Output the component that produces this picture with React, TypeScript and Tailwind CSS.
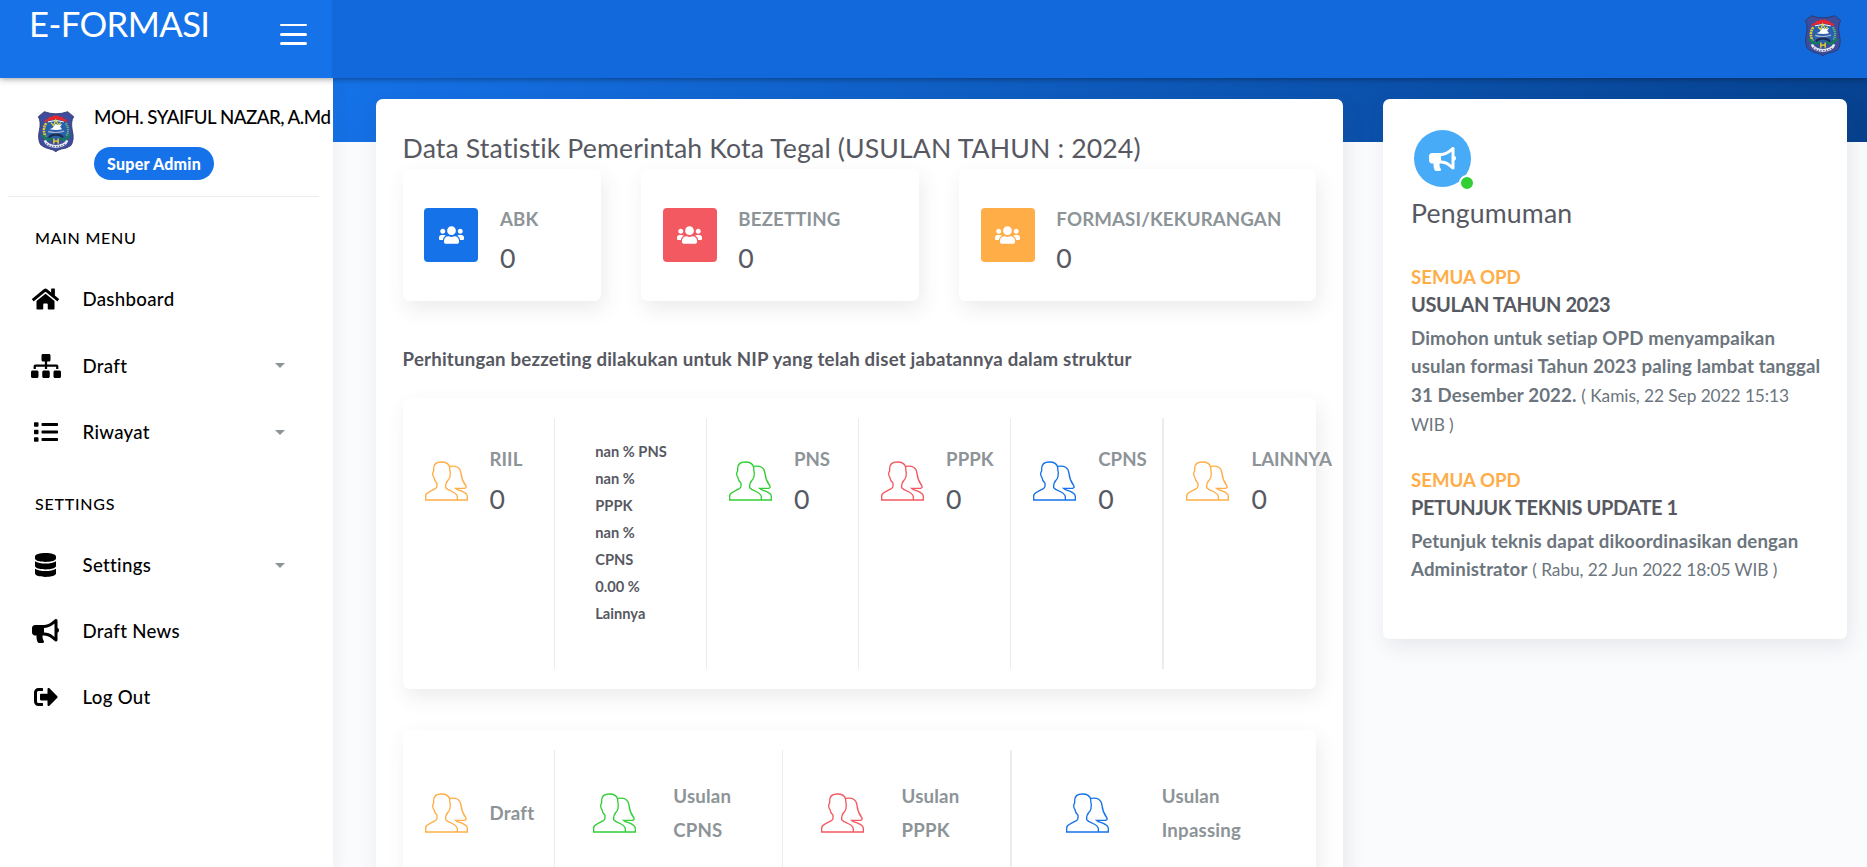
import React from 'react';
import {
  FaHome,
  FaSitemap,
  FaList,
  FaDatabase,
  FaBullhorn,
  FaSignOutAlt,
  FaUsers,
} from 'react-icons/fa';

const cardShadow = 'shadow-[3px_8px_20px_0_rgba(69,65,78,0.1)]';

function Crest() {
  return (
    <svg viewBox="0 0 115 130" className="h-[43px] w-[38px] shrink-0">
      <path
        d="M22 5 Q57 18 93 5 L111 20 Q101 36 107 62 Q114 92 102 108 Q88 117 74 118 Q62 121 57 126 Q50 120 38 118 Q22 115 11 105 Q1 88 7 62 Q13 36 4 20 Z"
        fill="#3f4c9c"
        stroke="#2b3568"
        strokeWidth="2.5"
      />
      <path d="M30 38 Q57 24 85 38 Q94 60 84 82 Q57 92 30 82 Q20 60 30 38 Z" fill="#2a5fae" />
      <path d="M22 38 L26 29 L33 27 L38 20 L45 21 L51 16 L57 18 L63 16 L70 21 L77 20 L81 27 L89 29 L92 38 L82 34 Q57 24 32 34 Z" fill="#e5282d" />
      <path d="M33 36 Q57 27 81 36" fill="none" stroke="#fff" strokeWidth="3" />
      <path d="M28 40 Q15 58 26 82" fill="none" stroke="#dcd22a" strokeWidth="8" strokeDasharray="6 2" />
      <path d="M87 40 Q100 58 89 80" fill="none" stroke="#4fbb8b" strokeWidth="7" strokeDasharray="4 2" />
      <path d="M42 38 L50 47 L57 30 L64 45 L72 38" fill="none" stroke="#e5df35" strokeWidth="3.5" />
      <path d="M38 58 Q49 55 51 49 L57 41 L62 46 L76 42 L70 51 L76 58 Q60 63 38 58 Z" fill="#fff" />
      <path d="M34 65 Q57 72 82 64" fill="none" stroke="#a3b4cc" strokeWidth="4" />
      <path d="M14 76 Q25 80 28 89 Q39 92 47 84 M101 76 Q90 80 87 89 Q76 92 68 84" fill="none" stroke="#0c8258" strokeWidth="7" />
      <path d="M36 83 Q44 74 57 74 Q71 74 79 83" fill="none" stroke="#1c2a4c" strokeWidth="6" />
      <path d="M51 86 V102 M64 86 V102 M49 94 H66" fill="none" stroke="#eadf29" strokeWidth="4" />
      <path d="M20 93 L27 91 Q34 104 57 106 Q81 104 88 91 L95 93 Q88 113 57 115 Q27 113 20 93 Z" fill="#e4e7f0" />
      <path d="M28 101 Q38 111 57 111 Q77 111 87 101" fill="none" stroke="#58628f" strokeWidth="4" strokeDasharray="4 4" />
    </svg>
  );
}

function PeopleOutline({ className }: { className: string }) {
  return (
    <svg viewBox="0 0 129 120" className={`h-10 w-[43px] shrink-0 ${className}`} fill="none" stroke="currentColor" strokeWidth="4">
      <path d="M2 117 V105 Q2 98 14 92 L31 83 Q36 80 36 75 V67 Q28 60 27 50 Q23 45 23 39 Q23 33 26 30 V22 Q26 3 49 3 Q71 3 74 19 Q74 29 76 36 Q75 42 75 47 Q73 54 69 58 Q61 66 62 80 L68 85 L84 93 Q97 100 97 108 V117" />
      <path d="M74 16 Q105 11 108 37 Q110 57 121 72 Q127 80 119 82 H92 L97 86 Q113 91 119 95 Q127 100 127 106 V117" />
      <path d="M0 117 H129" />
    </svg>
  );
}

function MenuItem({ icon, label, height, caret }: { icon: React.ReactNode; label: string; height: string; caret?: boolean }) {
  return (
    <li className={`flex items-center pl-[30px] pr-[48px] text-black ${height}`}>
      <span className="flex w-[31px] justify-center">{icon}</span>
      <span className="ml-[21.5px] text-[18.67px] leading-7 font-medium tracking-[0.3px]">{label}</span>
      {caret && (
        <span className="ml-auto border-x-[5px] border-t-[5px] border-x-transparent border-t-[#8d9498]" />
      )}
    </li>
  );
}

function SectionLabel({ children }: { children: React.ReactNode }) {
  return <h4 className="pl-[35px] text-[16px] leading-6 font-medium tracking-[0.75px] text-black">{children}</h4>;
}

function Sidebar() {
  return (
    <aside className="relative z-10 w-[333px] shrink-0 bg-white shadow-[4px_4px_13px_0_rgba(69,65,78,0.06)]">
      <div className="mx-2 mr-[14px] flex h-[119px] border-b border-[#ebecec] pl-[29px] pt-[25px]">
        <div className="mt-[7px]">
          <Crest />
        </div>
        <div className="ml-[19px] flex flex-col items-start whitespace-nowrap">
          <span className="text-[18.67px] leading-7 font-medium tracking-[-0.48px] text-black">MOH. SYAIFUL NAZAR, A.Md</span>
          <span className="mt-4 flex h-[33px] items-center rounded-full bg-[#1572e8] px-[13px] text-[16px] font-black tracking-[0.25px] text-white">
            Super Admin
          </span>
        </div>
      </div>
      <nav className="pt-[29px]">
        <SectionLabel>MAIN MENU</SectionLabel>
        <ul className="mt-4">
          <MenuItem height="h-[66.5px]" icon={<FaHome className="h-6 w-[27px]" />} label="Dashboard" />
          <MenuItem height="h-[66.5px]" icon={<FaSitemap className="h-6 w-[30px]" />} label="Draft" caret />
          <MenuItem height="h-[66px]" icon={<FaList className="h-6 w-6" />} label="Riwayat" caret />
        </ul>
        <div className="mt-[27px]">
          <SectionLabel>SETTINGS</SectionLabel>
        </div>
        <ul className="mt-4">
          <MenuItem height="h-[66px]" icon={<FaDatabase className="h-6 w-[21px]" />} label="Settings" caret />
          <MenuItem height="h-[66px]" icon={<FaBullhorn className="h-6 w-[27px]" />} label="Draft News" />
          <MenuItem height="h-[66px]" icon={<FaSignOutAlt className="h-6 w-6" />} label="Log Out" />
        </ul>
      </nav>
    </aside>
  );
}

function SummaryCard({ width, color, label }: { width: string; color: string; label: string }) {
  return (
    <div className={`flex h-[132px] rounded-[6.67px] bg-white pl-[21.7px] ${width} ${cardShadow}`}>
      <div className={`mt-[39px] flex h-[54px] w-[54px] shrink-0 items-center justify-center rounded-[4px] text-white ${color}`}>
        <FaUsers className="h-5 w-[25px]" />
      </div>
      <div className="ml-[21.7px] mt-9">
        <p className="text-[18.67px] leading-7 font-bold tracking-[0.13px] text-[#8d9498]">{label}</p>
        <p className="mt-[7px] text-[26.67px] leading-[37px] text-[#575962]">0</p>
      </div>
    </div>
  );
}

function CountCell({ color, label, last }: { color: string; label: string; last?: boolean }) {
  return (
    <div className={`flex border-[#ebecec] pl-[22px] ${last ? 'border-l' : 'border-r'}`}>
      <PeopleOutline className={`mt-[43.3px] ${color}`} />
      <div className="ml-[22px] mt-[27px]">
        <p className="text-[18.67px] leading-7 font-bold text-[#8d9498]">{label}</p>
        <p className="mt-[8px] text-[26.67px] leading-[37px] text-[#575962]">0</p>
      </div>
    </div>
  );
}

const shares = ['nan % PNS', 'nan %', 'PPPK', 'nan %', 'CPNS', '0.00 %', 'Lainnya'];

function StatisticsCard() {
  return (
    <section className={`h-[900px] w-[967px] shrink-0 rounded-[6.67px] bg-white pl-[26.6px] pr-[27.4px] pt-[33px] ${cardShadow}`}>
      <h2 className="text-[26.67px] leading-8 tracking-[0.12px] whitespace-nowrap text-[#575962]">
        Data Statistik Pemerintah Kota Tegal (USULAN TAHUN : 2024)
      </h2>
      <div className="mt-[5px] flex gap-10">
        <SummaryCard width="w-[198.4px]" color="bg-[#1572e8]" label="ABK" />
        <SummaryCard width="w-[278px]" color="bg-[#f25961]" label="BEZETTING" />
        <SummaryCard width="w-[356.6px]" color="bg-[#ffad46]" label="FORMASI/KEKURANGAN" />
      </div>
      <p className="mt-[44px] text-[18.67px] leading-7 font-bold tracking-[0.19px] whitespace-nowrap text-[#575962]">
        Perhitungan bezzeting dilakukan untuk NIP yang telah diset jabatannya dalam struktur
      </p>

      <div className={`mt-[25px] grid h-[291px] grid-cols-6 rounded-[6.67px] bg-white py-5 ${cardShadow}`}>
        <CountCell color="text-[#ffad46]" label="RIIL" />
        <div className="border-r border-[#ebecec] pl-[40.5px] pt-5 text-[14.67px] leading-[27px] font-bold text-[#575962]">
          {shares.map((share, i) => (
            <p key={i}>{share}</p>
          ))}
        </div>
        <CountCell color="text-[#31ce36]" label="PNS" />
        <CountCell color="text-[#f25961]" label="PPPK" />
        <CountCell color="text-[#1572e8]" label="CPNS" />
        <CountCell color="text-[#ffad46]" label="LAINNYA" last />
      </div>

      <div className={`mt-[41px] grid h-[200px] grid-cols-12 rounded-[6.67px] bg-white py-5 text-[18.67px] leading-[34px] font-bold tracking-[0.2px] text-[#8d9498] ${cardShadow}`}>
        <div className="col-span-2 flex border-r border-[#ebecec] pl-[22px]">
          <PeopleOutline className="mt-[43.3px] text-[#ffad46]" />
          <p className="ml-[22px] mt-[46px]">Draft</p>
        </div>
        <div className="col-span-3 flex border-r border-[#ebecec] pl-[38px]">
          <PeopleOutline className="mt-[43.3px] text-[#31ce36]" />
          <p className="ml-[37.5px] mt-[29px] w-20">Usulan CPNS</p>
        </div>
        <div className="col-span-3 flex border-r border-[#ebecec] pl-[38px]">
          <PeopleOutline className="mt-[43.3px] text-[#f25961]" />
          <p className="ml-[37.5px] mt-[29px] w-20">Usulan PPPK</p>
        </div>
        <div className="col-span-4 flex border-l border-[#ebecec] pl-[53.5px]">
          <PeopleOutline className="mt-[43.3px] text-[#1572e8]" />
          <p className="ml-[53px] mt-[29px] w-24">Usulan Inpassing</p>
        </div>
      </div>
    </section>
  );
}

function Announcement({ title, body, date }: { title: string; body: string; date: string }) {
  return (
    <article>
      <h6 className="text-[18.67px] leading-7 font-bold text-[#ffad46]">SEMUA OPD</h6>
      <h5 className="text-[20px] leading-[26px] font-bold tracking-[-0.4px] text-[#575962]">{title}</h5>
      <p className="mt-[7px] text-[18.67px] leading-[28.4px] text-[#6c757d]">
        <b className="font-bold tracking-[0.13px]">{body}</b>{' '}
        <span className="text-[17.33px] tracking-[-0.08px]">( {date}&nbsp;)</span>
      </p>
    </article>
  );
}

function AnnouncementsCard() {
  return (
    <section className={`h-[540px] w-[464px] shrink-0 rounded-[6.67px] bg-white pl-7 pr-6 pt-[31px] ${cardShadow}`}>
      <div className="relative ml-[3px] flex h-[57px] w-[57px] items-center justify-center rounded-full bg-[#48abf7] text-white">
        <FaBullhorn className="h-6 w-[27px]" />
        <span className="absolute -right-[4px] -bottom-[4px] h-4 w-4 rounded-full border-2 border-white bg-[#31ce36]" />
      </div>
      <h2 className="mt-[10px] text-[26.67px] leading-8 tracking-[0.15px] text-[#575962]">Pengumuman</h2>
      <div className="mt-[34px] flex flex-col gap-[26px]">
        <Announcement
          title="USULAN TAHUN 2023"
          body="Dimohon untuk setiap OPD menyampaikan usulan formasi Tahun 2023 paling lambat tanggal 31 Desember 2022."
          date="Kamis, 22 Sep 2022 15:13 WIB"
        />
        <Announcement
          title="PETUNJUK TEKNIS UPDATE 1"
          body="Petunjuk teknis dapat dikoordinasikan dengan Administrator"
          date="Rabu, 22 Jun 2022 18:05 WIB"
        />
      </div>
    </section>
  );
}

export default function App() {
  return (
    <div className="flex h-[867px] w-full flex-col overflow-hidden bg-[#f9fbfd] font-['Lato',sans-serif] [font-variant-ligatures:none]">
      <header className="relative z-20 flex h-[78px] shrink-0 bg-[#1269db] shadow-[0_0_7px_rgba(0,0,0,0.5)]">
        <div className="flex w-[332px] justify-between bg-[#1572e8] pl-[29px] pr-[25px] text-white">
          <span className="mt-[3px] text-[34.67px] leading-[42px] tracking-[-0.6px]">E-FORMASI</span>
          <div className="mt-[23.7px] flex w-[27px] flex-col gap-[6.6px]">
            <span className="h-[2.67px] rounded-full bg-white" />
            <span className="h-[2.67px] rounded-full bg-white" />
            <span className="h-[2.67px] rounded-full bg-white" />
          </div>
        </div>
        <div className="ml-auto mr-[25px] mt-[14px]">
          <Crest />
        </div>
      </header>
      <div className="flex min-h-0 flex-1">
        <Sidebar />
        <main className="min-w-0 flex-1">
          <div className="h-16 bg-[linear-gradient(-45deg,#06418e,#1572e8)]" />
          <div className="-mt-[43px] flex items-start gap-10 pl-[43px]">
            <StatisticsCard />
            <AnnouncementsCard />
          </div>
        </main>
      </div>
    </div>
  );
}
